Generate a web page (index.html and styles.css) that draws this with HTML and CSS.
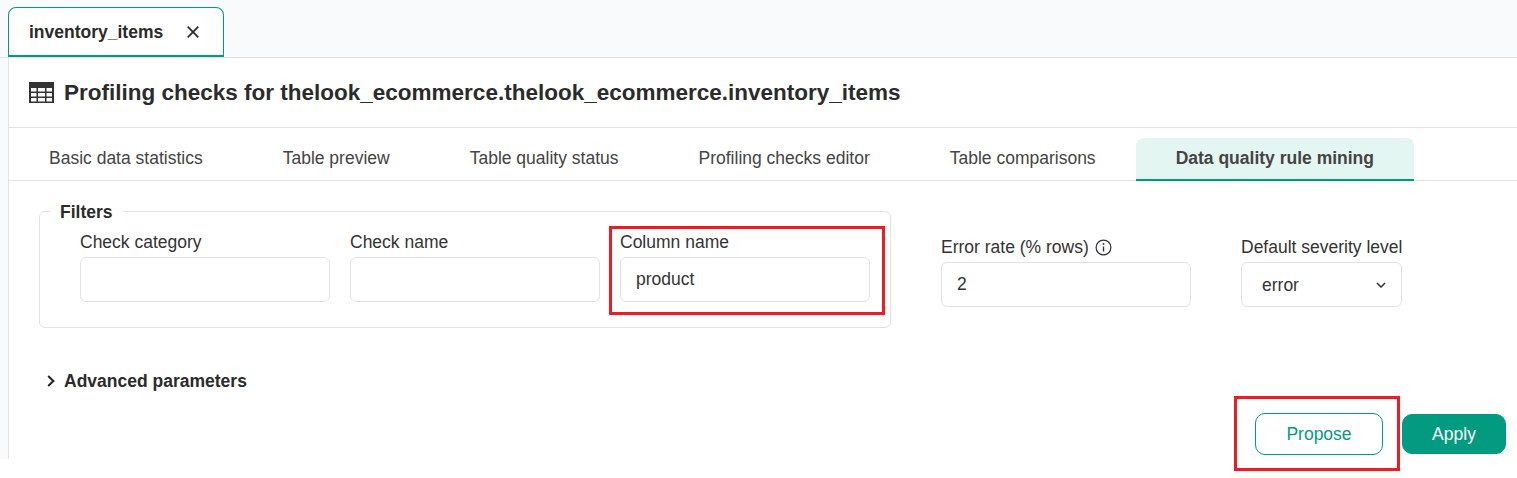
FILE: index.html
```html
<!DOCTYPE html>
<html lang="en">
<head>
<meta charset="utf-8">
<title>Profiling checks</title>
<link rel="stylesheet" href="styles.css">
</head>
<body>
<div class="app">
  <nav class="pagetabs">
    <div class="pagetab">
      <span>inventory_items</span>
      <svg class="close" width="12" height="12" viewBox="0 0 12 12"><path d="M.7.7 11.3 11.3M11.3.7.7 11.3" fill="none" stroke="#2b2b2b" stroke-width="1.8"/></svg>
    </div>
  </nav>
  <main class="main">
    <header class="heading">
      <svg class="table-icon" width="25" height="21" viewBox="0 0 25 21"><path fill="#333" fill-rule="evenodd" d="M0 0H25V21H0ZM2 6V9.5H7.5V6ZM9 6V9.5H16V6ZM17.5 6V9.5H23V6ZM2 11V14.5H7.5V11ZM9 11V14.5H16V11ZM17.5 11V14.5H23V11ZM2 16V19.5H7.5V16ZM9 16V19.5H16V16ZM17.5 16V19.5H23V16Z"/></svg>
      <h1>Profiling checks for thelook_ecommerce.thelook_ecommerce.inventory_items</h1>
    </header>
    <div class="subtabs">
      <div class="subtab">Basic data statistics</div>
      <div class="subtab">Table preview</div>
      <div class="subtab">Table quality status</div>
      <div class="subtab">Profiling checks editor</div>
      <div class="subtab">Table comparisons</div>
      <div class="subtab active">Data quality rule mining</div>
    </div>
    <section class="content">
      <div class="filters-row">
        <fieldset class="filters">
          <legend>Filters</legend>
          <div class="field"><label>Check category</label><div class="input"></div></div>
          <div class="field"><label>Check name</label><div class="input"></div></div>
          <div class="field"><label>Column name</label><div class="input">product</div></div>
        </fieldset>
        <div class="field outer"><label>Error rate (% rows)
          <svg class="info" width="17" height="17" viewBox="0 0 17 17"><circle cx="8.5" cy="8.5" r="7.4" fill="none" stroke="#333" stroke-width="1.2"/><path d="M8.5 7.5V12.5" stroke="#333" stroke-width="1.4"/><circle cx="8.5" cy="5" r="1" fill="#333"/></svg></label>
          <div class="input">2</div></div>
        <div class="field outer severity"><label>Default severity level</label>
          <div class="input select">error
            <svg width="10" height="6" viewBox="0 0 10 6"><path d="M1 1 5 5 9 1" fill="none" stroke="#333" stroke-width="1.5"/></svg>
          </div></div>
      </div>
      <div class="advanced">
        <svg width="8" height="12" viewBox="0 0 8 12"><path d="M1.2 1 6.4 6 1.2 11" fill="none" stroke="#222" stroke-width="2"/></svg>
        <span>Advanced parameters</span>
      </div>
      <div class="actions">
        <button class="btn outline">Propose</button>
        <button class="btn solid">Apply</button>
      </div>
    </section>
  </main>
</div>
<div class="mark mark-column"></div>
<div class="mark mark-propose"></div>
</body>
</html>
```
FILE: styles.css
```css
* { box-sizing: border-box; }
html, body { margin: 0; background: #fff; }
body {
  font-family: "Liberation Sans", Arial, sans-serif;
  font-size: 17.5px;
  color: #333;
  position: relative;
  height: 478px;
  overflow: hidden;
}
.app { height: 459px; background: #f9fafb; display: flex; flex-direction: column; }
.pagetabs { height: 58px; padding: 7px 0 0 8px; border-bottom: 1px solid #e2e2e2; flex: none; }
.pagetab {
  width: 216px; height: 50px;
  background: #fff;
  border: 1px solid #029a80;
  border-bottom-width: 2px;
  border-radius: 8px 8px 0 0;
  padding: 2px 0 0 20px;
  display: flex; align-items: center;
  font-weight: 700;
  color: #2b2b2b;
}
.close { margin-left: 24px; margin-top: -1px; }
.main { flex: 1; margin-left: 8px; background: #fff; border-left: 1px solid #e2e2e2; }
.heading {
  height: 70px;
  padding-left: 20px;
  border-bottom: 1px solid #e2e2e2;
  display: flex; align-items: center; gap: 10px;
}
.table-icon { flex: none; }
h1 { margin: 0; font-size: 22.5px; font-weight: 700; color: #2b2b2b; }
.subtabs { height: 53px; padding-top: 10px; border-bottom: 1px solid #e2e2e2; display: flex; }
.subtab {
  height: 43px;
  padding: 0 40px;
  line-height: 40px;
  color: #444;
}
.subtab.active {
  font-weight: 700;
  background: #e4f6f2;
  border-bottom: 2px solid #029a80;
  border-radius: 8px 8px 0 0;
}
.content { padding: 20px 11px 0 30px; }
.filters-row { display: flex; align-items: flex-start; }
.filters {
  margin: 0;
  width: 852px; height: 127px;
  padding: 9px 20px 0 40px;
  border: 1px solid #e2e2e2;
  border-radius: 6px;
  display: flex; gap: 20px;
}
.filters legend { margin-left: -30px; padding: 2px 10px 0; font-weight: 700; line-height: 18px; color: #2b2b2b; }
.field { width: 250px; }
.field label { display: block; line-height: 18px; height: 24px; margin-top: 3px; white-space: nowrap; }
.input {
  height: 45px;
  border: 1px solid #e2e2e2;
  border-radius: 6px;
  padding: 0 15px;
  line-height: 43px;
  color: #333;
}
.outer { margin-top: 34px; }
.outer:first-of-type { margin-left: 50px; }
.severity { width: 161px; margin-left: 50px; }
.select { padding: 1px 15px 0 20px; display: flex; align-items: center; justify-content: space-between; }
.info { vertical-align: -3px; margin-left: 1px; }
.advanced { display: flex; align-items: center; gap: 9px; margin: 44px 0 0 8px; font-weight: 700; color: #2b2b2b; line-height: 18px; }
.actions { display: flex; justify-content: flex-end; align-items: center; gap: 19px; margin-top: 23px; }
.btn { font: inherit; border-radius: 10px; padding: 0; }
.outline { width: 128px; height: 42px; background: #fff; border: 1px solid #029a80; color: #029a80; }
.solid { width: 104px; height: 40px; background: #029a80; border: 1px solid #029a80; color: #fff; }
.mark { position: absolute; border: 3px solid #ed1c24; }
.mark-column { left: 609px; top: 226px; width: 276px; height: 89px; }
.mark-propose { left: 1234px; top: 396px; width: 166px; height: 75px; }
```
